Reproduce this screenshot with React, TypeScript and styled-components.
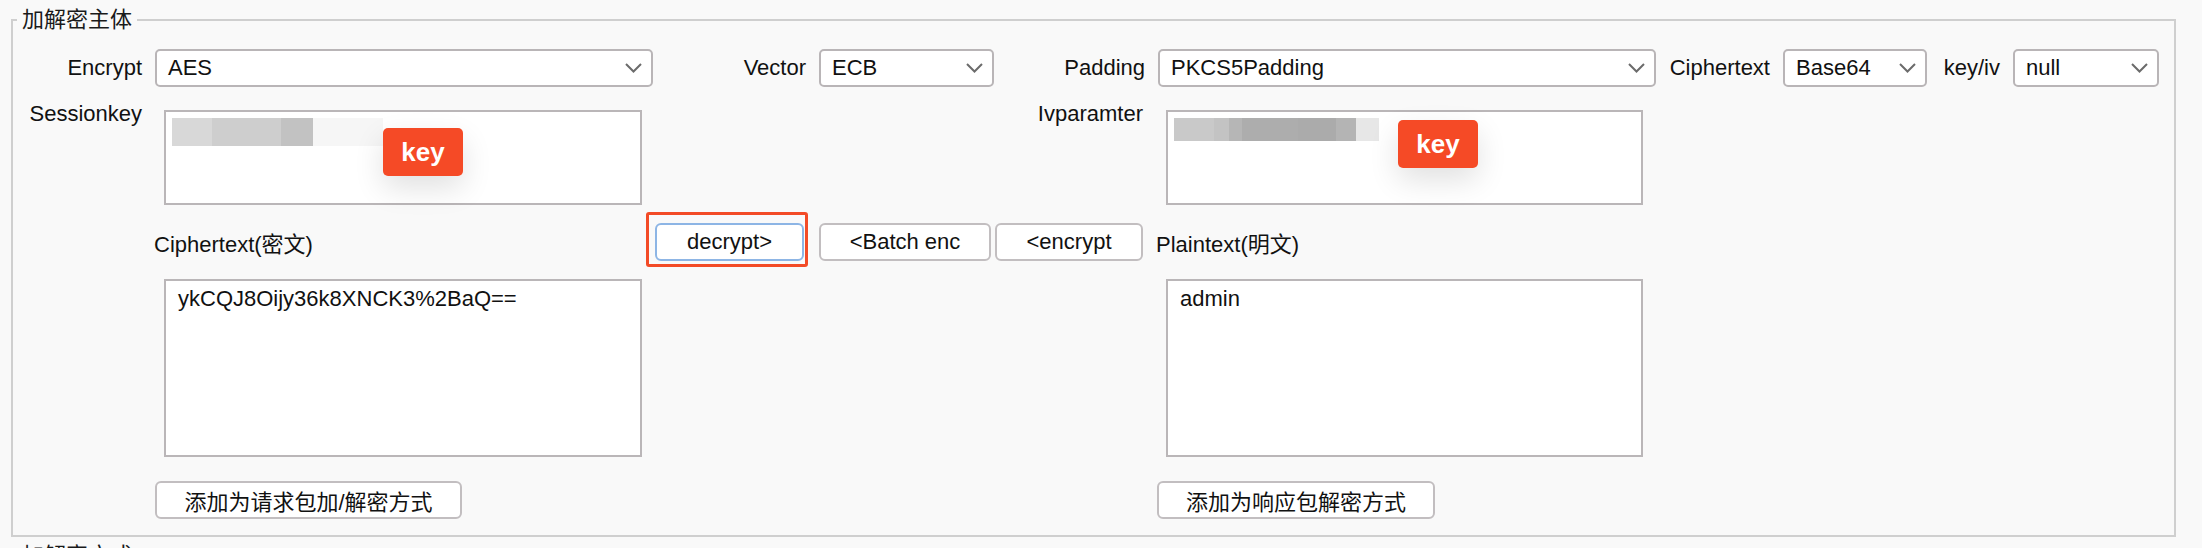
import React from 'react'
import styled, { createGlobalStyle } from 'styled-components'

const GlobalStyle = createGlobalStyle`
  html, body {
    margin: 0;
    padding: 0;
    background: #f9f9f9;
  }
  body {
    font-family: 'Liberation Sans', 'Noto Sans CJK SC', Arial, sans-serif;
    font-size: 22px;
    color: #111;
  }
`

const Page = styled.div`
  width: 2202px;
  height: 548px;
  overflow: hidden;
  box-sizing: border-box;
  padding: 7px 26px 0 11px;
`

const Group = styled.fieldset`
  margin: 0;
  padding: 0;
  min-width: 0;
  border: 2px solid #cfcfcf;
  & + & {
    margin-top: 6px;
  }
`

const Legend = styled.legend`
  margin-left: 4px;
  padding: 0 5px;
  font-size: 22px;
  line-height: 26px;
  color: #1a1a1a;
`

const Body = styled.div`
  display: flex;
  flex-direction: column;
  padding: 16px 0 16px;
`

const TopBar = styled.div`
  display: flex;
  align-items: center;
  height: 38px;
`

const Field = styled.div`
  display: flex;
  align-items: center;
  gap: 13px;
`

const FieldLabel = styled.span<{ $w: number }>`
  width: ${(p) => p.$w}px;
  text-align: right;
  white-space: nowrap;
`

const SelectBox = styled.div<{ $w: number }>`
  box-sizing: border-box;
  width: ${(p) => p.$w}px;
  height: 38px;
  display: flex;
  align-items: center;
  justify-content: space-between;
  padding: 0 9px 0 11px;
  background: #fff;
  border: 2px solid #b9b5b7;
  border-radius: 5px;
`

const Grid = styled.div`
  display: grid;
  grid-template-columns: 141px 492px 509px 1fr;
  grid-template-rows: 95px 74px 178px 62px;
  margin-top: 23px;
`

const SideLabel = styled.span<{ $col: number }>`
  grid-column: ${(p) => p.$col};
  grid-row: 1;
  align-self: start;
  margin-top: -7px;
  padding-right: 12px;
  text-align: right;
  line-height: 22px;
  white-space: nowrap;
`

const Caption = styled.span<{ $col: number; $x?: number }>`
  grid-column: ${(p) => p.$col};
  grid-row: 2;
  align-self: center;
  margin-left: ${(p) => p.$x || 0}px;
  white-space: nowrap;
`

const TextBox = styled.div<{ $col: number; $row: number; $x: number; $w: number }>`
  grid-column: ${(p) => p.$col};
  grid-row: ${(p) => p.$row};
  position: relative;
  box-sizing: border-box;
  width: ${(p) => p.$w}px;
  margin-left: ${(p) => p.$x}px;
  background: #fff;
  border: 2px solid #bab6b8;
  padding: 6px 12px;
  line-height: 24px;
`

const Mosaic = styled.div<{ $shift: number; $h: number }>`
  display: flex;
  height: ${(p) => p.$h}px;
  margin-left: -${(p) => p.$shift}px;
`

const MosaicCell = styled.span<{ $w: number; $c: string }>`
  width: ${(p) => p.$w}px;
  background: ${(p) => p.$c};
`

const KeyBadge = styled.span<{ $x: number; $y: number }>`
  position: absolute;
  left: ${(p) => p.$x}px;
  top: ${(p) => p.$y}px;
  width: 80px;
  height: 48px;
  display: flex;
  align-items: center;
  justify-content: center;
  background: #f54a26;
  color: #fff;
  font-size: 26px;
  font-weight: bold;
  border-radius: 5px;
  box-shadow: 0 12px 30px rgba(0, 0, 0, 0.12);
`

const ButtonBar = styled.div`
  grid-column: 3;
  grid-row: 2;
  display: flex;
  align-items: center;
  gap: 4px;
  padding-left: 9px;
`

const Highlight = styled.div`
  position: relative;
  display: flex;
  margin-right: 11px;
`

const Annotation = styled.span`
  position: absolute;
  left: -9px;
  top: -11px;
  width: 162px;
  height: 55px;
  box-sizing: border-box;
  border: 3px solid #f34b27;
  border-radius: 3px;
  pointer-events: none;
`

const ActionButton = styled.button<{ $w: number; $focused?: boolean }>`
  box-sizing: border-box;
  width: ${(p) => p.$w}px;
  height: 38px;
  padding: 0;
  background: #fff;
  border: 2px solid ${(p) => (p.$focused ? '#8db5e5' : '#c2bec0')};
  border-radius: 6px;
  font: inherit;
  color: #111;
`

const FooterButton = styled(ActionButton)<{ $col: number; $x: number }>`
  grid-column: ${(p) => p.$col};
  grid-row: 4;
  align-self: end;
  margin-left: ${(p) => p.$x}px;
`

const Chevron = () => (
  <svg width='17' height='10' viewBox='0 0 17 10'>
    <polyline points='1,1 8.5,8.5 16,1' fill='none' stroke='#6b6b6b' strokeWidth='2' />
  </svg>
)

const Select = ({ w, value }: { w: number; value: string }) => (
  <SelectBox $w={w}>
    <span>{value}</span>
    <Chevron />
  </SelectBox>
)

const sessionBlur: [number, string][] = [
  [40, '#d8d8d8'],
  [69, '#cecece'],
  [32, '#c2c2c2'],
  [70, '#f6f6f6'],
]

const ivBlur: [number, string][] = [
  [40, '#c9c9c9'],
  [15, '#c3c3c3'],
  [13, '#b6b6b6'],
  [56, '#adadad'],
  [38, '#ababab'],
  [20, '#b4b4b4'],
  [23, '#e7e7e7'],
]

const fields = [
  { label: 'Encrypt', lw: 129, value: 'AES', w: 498 },
  { label: 'Vector', lw: 153, value: 'ECB', w: 175 },
  { label: 'Padding', lw: 151, value: 'PKCS5Padding', w: 498 },
  { label: 'Ciphertext', lw: 114, value: 'Base64', w: 144 },
  { label: 'key/iv', lw: 73, value: 'null', w: 146 },
]

const App = () => {
  return (
    <Page>
      <GlobalStyle />
      <Group>
        <Legend>加解密主体</Legend>
        <Body>
          <TopBar>
            {fields.map((f) => (
              <Field key={f.label}>
                <FieldLabel $w={f.lw}>{f.label}</FieldLabel>
                <Select w={f.w} value={f.value} />
              </Field>
            ))}
          </TopBar>

          <Grid>
            <SideLabel $col={1}>Sessionkey</SideLabel>
            <TextBox $col={2} $row={1} $x={10} $w={478}>
              <Mosaic $shift={6} $h={28}>
                {sessionBlur.map(([w, c], i) => (
                  <MosaicCell key={i} $w={w} $c={c} />
                ))}
              </Mosaic>
              <KeyBadge $x={217} $y={16}>key</KeyBadge>
            </TextBox>
            <SideLabel $col={3}>Ivparamter</SideLabel>
            <TextBox $col={4} $row={1} $x={11} $w={477}>
              <Mosaic $shift={6} $h={23}>
                {ivBlur.map(([w, c], i) => (
                  <MosaicCell key={i} $w={w} $c={c} />
                ))}
              </Mosaic>
              <KeyBadge $x={230} $y={8}>key</KeyBadge>
            </TextBox>

            <Caption $col={2}>Ciphertext(密文)</Caption>
            <ButtonBar>
              <Highlight>
                <ActionButton $w={149} $focused>
                  decrypt&gt;
                </ActionButton>
                <Annotation />
              </Highlight>
              <ActionButton $w={172}>&lt;Batch enc</ActionButton>
              <ActionButton $w={148}>&lt;encrypt</ActionButton>
            </ButtonBar>
            <Caption $col={4} $x={1}>
              Plaintext(明文)
            </Caption>

            <TextBox $col={2} $row={3} $x={10} $w={478}>
              ykCQJ8Oijy36k8XNCK3%2BaQ==
            </TextBox>
            <TextBox $col={4} $row={3} $x={11} $w={477}>
              admin
            </TextBox>

            <FooterButton $col={2} $x={1} $w={307}>
              添加为请求包加/解密方式
            </FooterButton>
            <FooterButton $col={4} $x={2} $w={278}>
              添加为响应包解密方式
            </FooterButton>
          </Grid>
        </Body>
      </Group>
      <Group>
        <Legend>加解密方式</Legend>
      </Group>
    </Page>
  )
}

export default App
